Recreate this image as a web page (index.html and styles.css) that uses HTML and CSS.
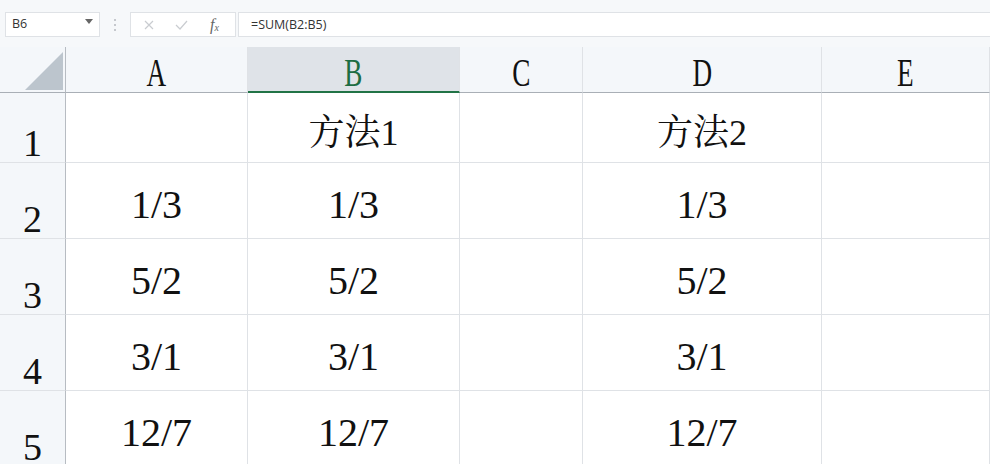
FILE: index.html
```html
<!DOCTYPE html>
<html lang="zh">
<head>
    <meta charset="UTF-8">
    <title>SUM</title>
    <link rel="stylesheet" href="styles.css">
</head>
<body>
    <!-- 编辑栏 -->
    <div class="toolbar">
        <div class="namebox">
            <span>B6</span>
            <svg class="caret" width="8" height="5" viewBox="0 0 8 5"><polygon points="0,0 8,0 4,5" fill="#666"/></svg>
        </div>
        <svg class="grip" width="4" height="14" viewBox="0 0 4 14">
            <circle cx="2" cy="2" r="1" fill="#b5b9be"/>
            <circle cx="2" cy="7" r="1" fill="#b5b9be"/>
            <circle cx="2" cy="12" r="1" fill="#b5b9be"/>
        </svg>
        <div class="fbtns">
            <svg class="btn" width="10" height="10" viewBox="0 0 10 10"><path d="M1 1 L9 9 M9 1 L1 9" stroke="#c9ccd0" stroke-width="1.2" fill="none"/></svg>
            <svg class="btn" width="13" height="10" viewBox="0 0 13 10"><path d="M1 5 L5 9 L12 1" stroke="#c9ccd0" stroke-width="1.2" fill="none"/></svg>
            <span class="fx"><i>f</i><sub>x</sub></span>
        </div>
        <div class="formula">=SUM(B2:B5)</div>
    </div>

    <!-- 表格 -->
    <div class="sheet">
        <div class="corner">
            <svg width="66" height="46" viewBox="0 0 66 46"><polygon points="25,43 63,43 63,5" fill="#bcc5cd"/></svg>
        </div>
        <div class="colhead"><span>A</span></div>
        <div class="colhead active"><span>B</span></div>
        <div class="colhead"><span>C</span></div>
        <div class="colhead"><span>D</span></div>
        <div class="colhead"><span>E</span></div>

        <div class="rowhead">1</div>
        <div class="cell title"></div>
        <div class="cell title">方法1</div>
        <div class="cell title"></div>
        <div class="cell title">方法2</div>
        <div class="cell title"></div>

        <div class="rowhead">2</div>
        <div class="cell">1/3</div>
        <div class="cell">1/3</div>
        <div class="cell"></div>
        <div class="cell">1/3</div>
        <div class="cell"></div>

        <div class="rowhead">3</div>
        <div class="cell">5/2</div>
        <div class="cell">5/2</div>
        <div class="cell"></div>
        <div class="cell">5/2</div>
        <div class="cell"></div>

        <div class="rowhead">4</div>
        <div class="cell">3/1</div>
        <div class="cell">3/1</div>
        <div class="cell"></div>
        <div class="cell">3/1</div>
        <div class="cell"></div>

        <!-- 最后一行只露出一部分 -->
        <div class="rowhead last">5</div>
        <div class="cell last">12/7</div>
        <div class="cell last">12/7</div>
        <div class="cell last"></div>
        <div class="cell last">12/7</div>
        <div class="cell last"></div>
    </div>
</body>
</html>
```

FILE: styles.css
```css
* {
  box-sizing: border-box;
}
body {
  margin: 0;
  width: 990px;
  height: 464px;
  overflow: hidden;
  background: #fff;
}

/* 编辑栏 */
.toolbar {
  display: flex;
  align-items: center;
  height: 47px;
  padding: 12px 0 10px 5px;
  background: #f6f8fa;
  font-family: "Open Sans", "Noto Sans", sans-serif;
  font-size: 12.5px;
  color: #333;
}
.namebox {
  display: flex;
  align-items: center;
  justify-content: space-between;
  width: 95px;
  height: 25px;
  padding: 0 6px 2px 6px;
  background: #fff;
  border: 1px solid #dfe2e6;
}
.caret {
  margin-top: -4px;
}
.grip {
  margin: 0 13px 0 13px;
}
.fbtns {
  display: flex;
  align-items: center;
  width: 106px;
  height: 25px;
  padding-left: 13px;
  background: #fff;
  border: 1px solid #dfe2e6;
}
.btn {
  margin-right: 21px;
}
.fbtns .btn + .btn {
  margin-right: 22px;
}
.fx {
  font-family: "Liberation Serif", serif;
  font-size: 16px;
  color: #666;
}
.fx sub {
  font-size: 10px;
  font-style: italic;
  vertical-align: -1px;
}
.formula {
  flex: 1;
  height: 25px;
  margin-left: 2px;
  padding: 1px 0 0 12px;
  background: #fff;
  border-top: 1px solid #dfe2e6;
  border-bottom: 1px solid #dfe2e6;
  border-left: 1px solid #dfe2e6;
  line-height: 21px;
}

/* 表格 */
.sheet {
  display: grid;
  grid-template-columns: 66px 182px 212px 123px 239px 1fr;
  grid-template-rows: 46px 70px 76px 76px 76px 73px;
  font-family: "Liberation Serif", "Noto Serif CJK SC", "Noto Sans CJK SC", serif;
  color: #111;
}
.corner {
  background: #f4f7fa;
  border-right: 1px solid #b7bcc2;
  border-bottom: 1px solid #a9afb6;
}
.corner svg {
  display: block;
}
.colhead {
  display: flex;
  justify-content: center;
  align-items: flex-end;
  background: #f4f7fa;
  border-right: 1px solid #dfe2e6;
  border-bottom: 1px solid #a9afb6;
  font-size: 40px;
  line-height: 38px;
}
.colhead span {
  display: inline-block;
  transform: scaleX(0.68);
}
.colhead.active {
  background: #dfe3e8;
  border-bottom: 2px solid #217346;
  color: #1d6d43;
}
.colhead.active span {
  margin-bottom: -1px;
}
.rowhead {
  display: flex;
  justify-content: center;
  align-items: flex-end;
  padding-bottom: 4px;
  background: #f4f7fa;
  border-right: 1px solid #b7bcc2;
  border-bottom: 1px solid #dfe2e6;
  font-size: 38px;
  line-height: 30px;
}
.cell {
  display: flex;
  justify-content: center;
  align-items: center;
  padding-top: 8px;
  border-right: 1px solid #dfe2e6;
  border-bottom: 1px solid #dfe2e6;
  font-size: 40px;
  line-height: 40px;
}
.cell.title {
  padding-top: 11px;
  font-size: 36px;
}
.rowhead.last {
  padding-bottom: 2px;
  border-bottom: 0;
}
.cell.last {
  padding-top: 11px;
  border-bottom: 0;
}
```
